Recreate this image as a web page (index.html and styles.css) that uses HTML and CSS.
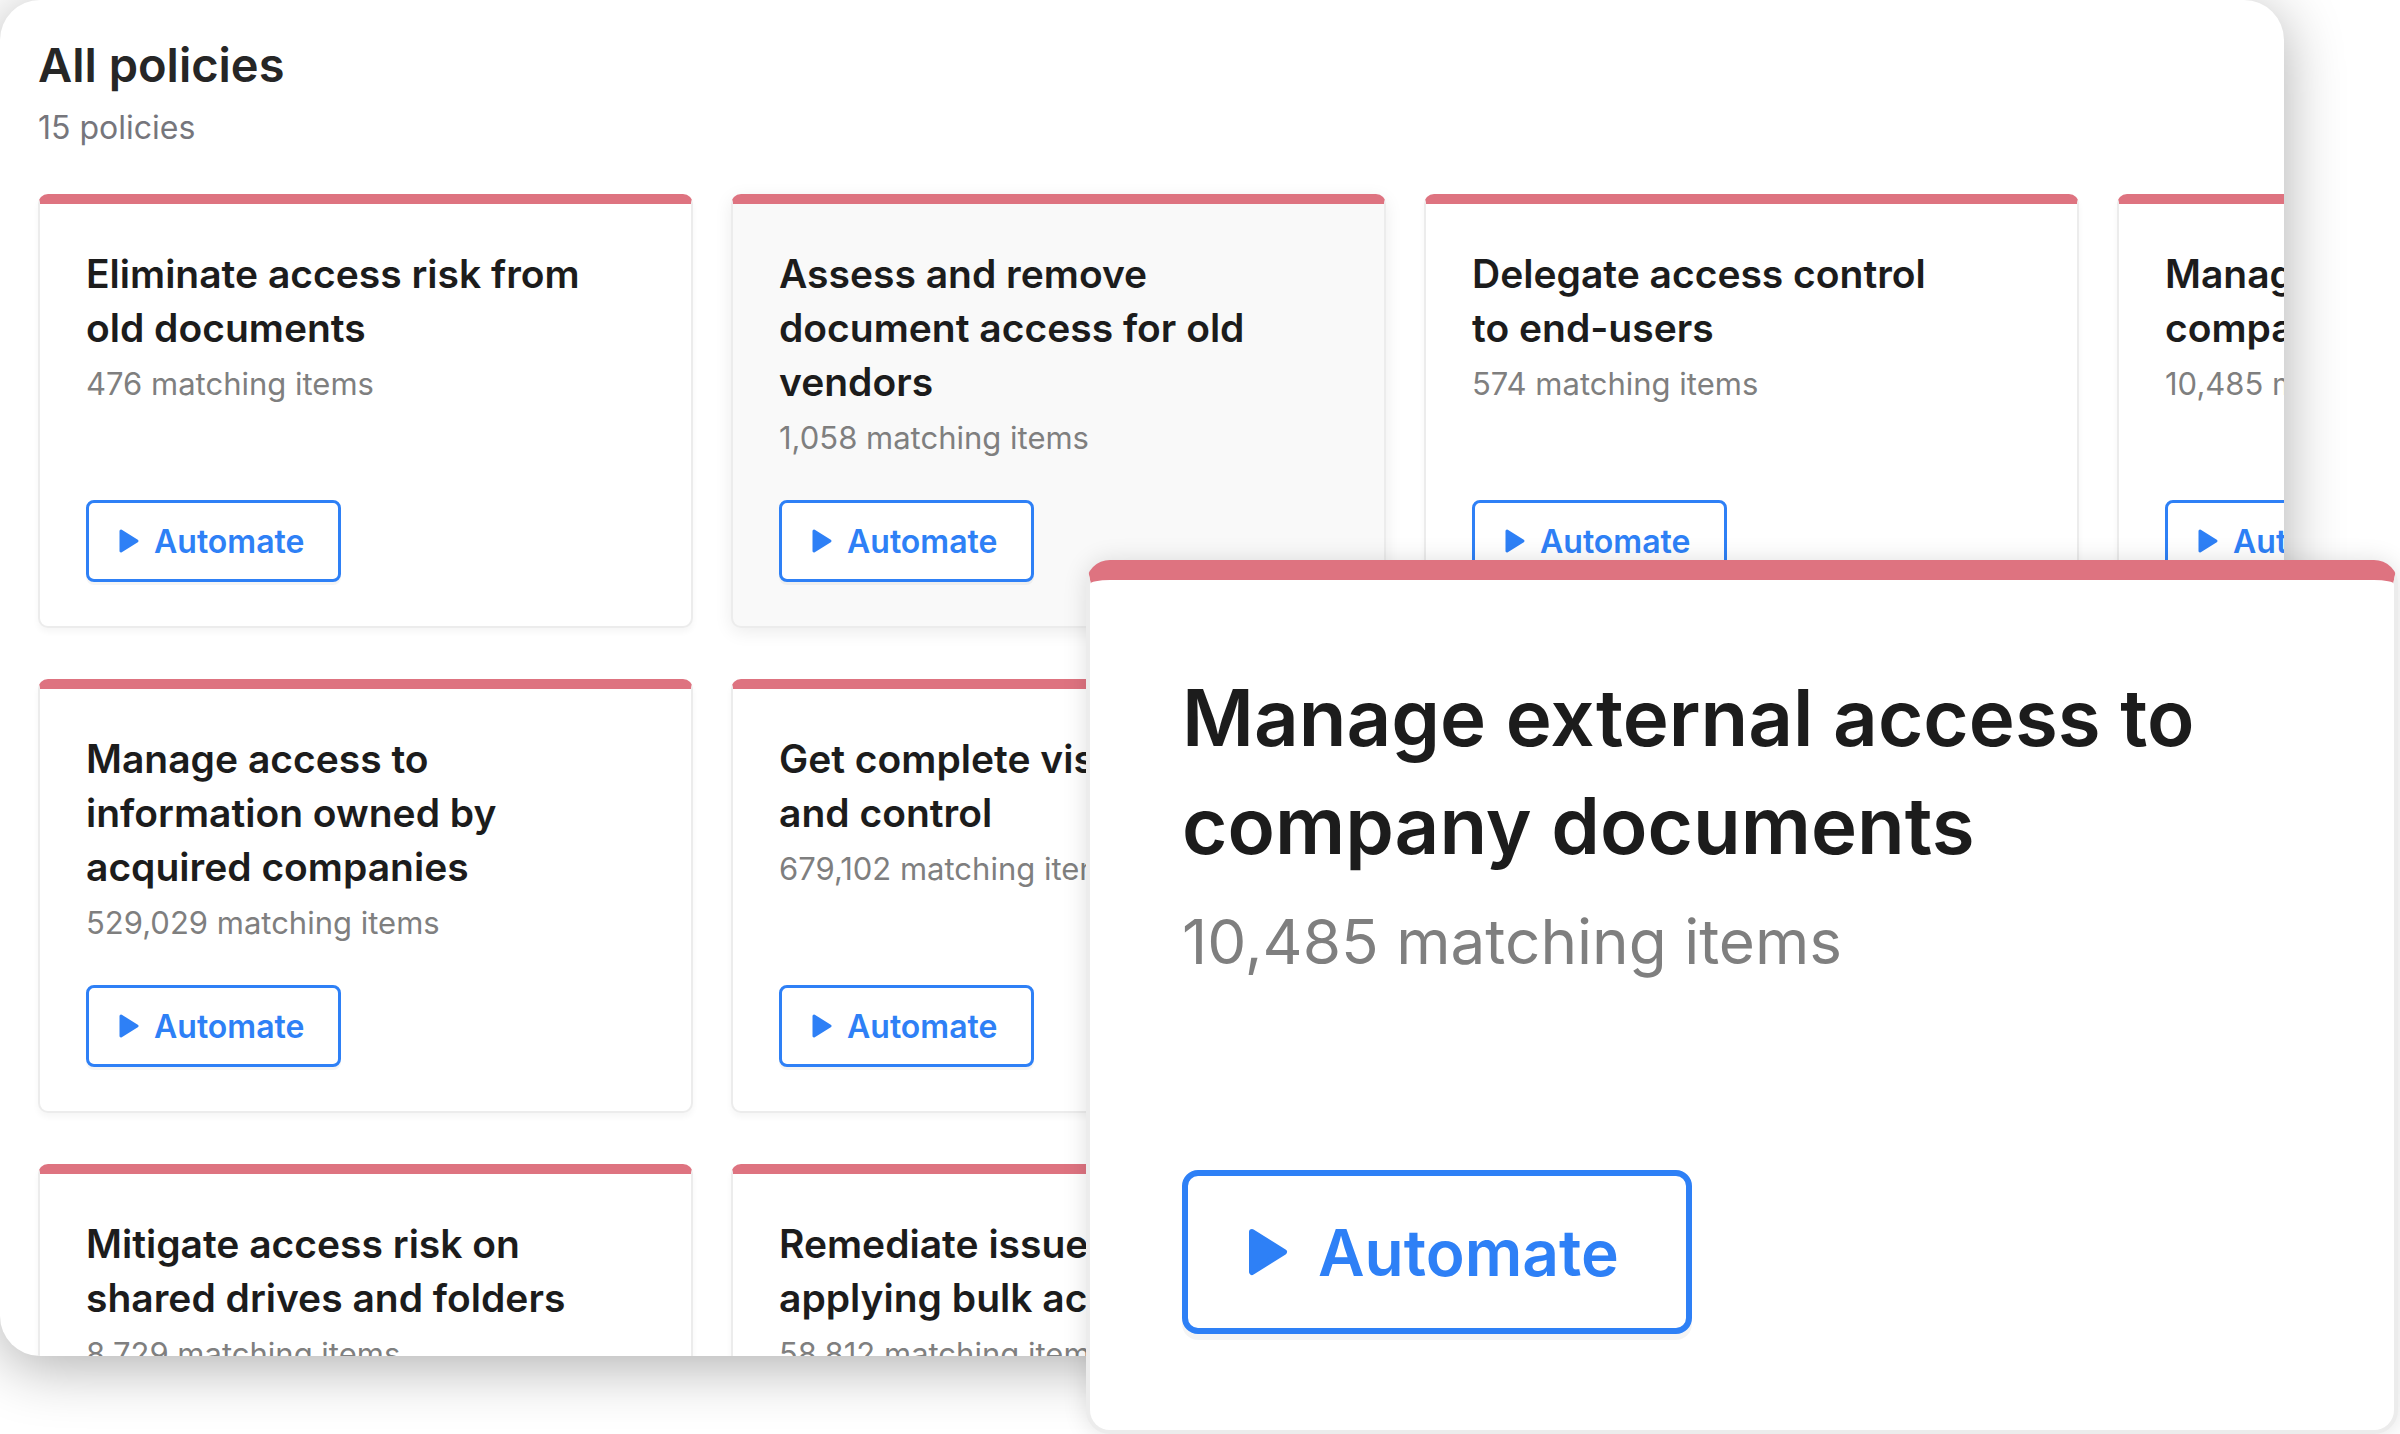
FILE: index.html
```html
<!DOCTYPE html>
<html lang="en">
<head>
	<meta charset="UTF-8">
	<title>All policies</title>
	<link rel="stylesheet" href="styles.css">
</head>
<body>
	<div class="panel">
		<h1 class="panel-title">All policies</h1>
		<p class="panel-sub">15 policies</p>

		<div class="grid">
			<div class="card">
				<h2 class="card-title">Eliminate access risk from old documents</h2>
				<p class="card-count">476 matching items</p>
				<button class="btn-automate"><svg class="play" viewBox="0 0 22 26"><path d="M3 3 L19 13 L3 23 Z"/></svg>Automate</button>
			</div>
			<div class="card card-hover">
				<h2 class="card-title">Assess and remove document access for old vendors</h2>
				<p class="card-count">1,058 matching items</p>
				<button class="btn-automate"><svg class="play" viewBox="0 0 22 26"><path d="M3 3 L19 13 L3 23 Z"/></svg>Automate</button>
			</div>
			<div class="card">
				<h2 class="card-title">Delegate access control<br>to end-users</h2>
				<p class="card-count">574 matching items</p>
				<button class="btn-automate"><svg class="play" viewBox="0 0 22 26"><path d="M3 3 L19 13 L3 23 Z"/></svg>Automate</button>
			</div>
			<div class="card">
				<h2 class="card-title">Manage external access to company documents</h2>
				<p class="card-count">10,485 matching items</p>
				<button class="btn-automate"><svg class="play" viewBox="0 0 22 26"><path d="M3 3 L19 13 L3 23 Z"/></svg>Automate</button>
			</div>

			<div class="card">
				<h2 class="card-title">Manage access to information owned by acquired companies</h2>
				<p class="card-count">529,029 matching items</p>
				<button class="btn-automate"><svg class="play" viewBox="0 0 22 26"><path d="M3 3 L19 13 L3 23 Z"/></svg>Automate</button>
			</div>
			<div class="card">
				<h2 class="card-title">Get complete visibility<br>and control</h2>
				<p class="card-count">679,102 matching items</p>
				<button class="btn-automate"><svg class="play" viewBox="0 0 22 26"><path d="M3 3 L19 13 L3 23 Z"/></svg>Automate</button>
			</div>
			<div class="card">
				<h2 class="card-title">Restrict sharing of sensitive documents</h2>
				<p class="card-count">3,417 matching items</p>
				<button class="btn-automate"><svg class="play" viewBox="0 0 22 26"><path d="M3 3 L19 13 L3 23 Z"/></svg>Automate</button>
			</div>
			<div class="card">
				<h2 class="card-title">Find files shared with personal accounts</h2>
				<p class="card-count">12,960 matching items</p>
				<button class="btn-automate"><svg class="play" viewBox="0 0 22 26"><path d="M3 3 L19 13 L3 23 Z"/></svg>Automate</button>
			</div>

			<div class="card">
				<h2 class="card-title">Mitigate access risk on shared drives and folders</h2>
				<p class="card-count">8,729 matching items</p>
				<button class="btn-automate"><svg class="play" viewBox="0 0 22 26"><path d="M3 3 L19 13 L3 23 Z"/></svg>Automate</button>
			</div>
			<div class="card">
				<h2 class="card-title">Remediate issues by applying bulk actions</h2>
				<p class="card-count">58,812 matching items</p>
				<button class="btn-automate"><svg class="play" viewBox="0 0 22 26"><path d="M3 3 L19 13 L3 23 Z"/></svg>Automate</button>
			</div>
			<div class="card">
				<h2 class="card-title">Remove public links to internal files</h2>
				<p class="card-count">2,306 matching items</p>
				<button class="btn-automate"><svg class="play" viewBox="0 0 22 26"><path d="M3 3 L19 13 L3 23 Z"/></svg>Automate</button>
			</div>
			<div class="card">
				<h2 class="card-title">Revoke access for departed employees</h2>
				<p class="card-count">41,775 matching items</p>
				<button class="btn-automate"><svg class="play" viewBox="0 0 22 26"><path d="M3 3 L19 13 L3 23 Z"/></svg>Automate</button>
			</div>
		</div>
	</div>

	<!-- the fourth card, shown at double size -->
	<div class="card card-zoom">
		<h2 class="card-title">Manage external access to company documents</h2>
		<p class="card-count">10,485 matching items</p>
		<button class="btn-automate"><svg class="play" viewBox="0 0 22 26"><path d="M3 3 L19 13 L3 23 Z"/></svg>Automate</button>
	</div>
</body>
</html>
```

FILE: styles.css
```css
html, body{
	margin: 0;
	background: #fff;
}
body{
	width: 2400px;
	height: 1434px;
	overflow: hidden;
	position: relative;
	font-family: Inter, "Noto Sans", "Liberation Sans", sans-serif;
}
.panel{
	box-sizing: border-box;
	width: 2284px;
	height: 1356px;
	padding: 36px 0 0 38px;
	background: #fff;
	border-radius: 40px;
	overflow: hidden;
	box-shadow: 0 10px 60px rgba(0,0,0,0.32);
}
.panel-title{
	margin: 0;
	font-size: 47px;
	line-height: 58px;
	font-weight: 600;
	color: #262626;
}
.panel-sub{
	margin: 14px 0 0;
	font-size: 32px;
	line-height: 40px;
	color: #76767c;
}
.grid{
	display: grid;
	grid-template-columns: repeat(4, 655px);
	grid-auto-rows: 434px;
	column-gap: 38px;
	row-gap: 51px;
	margin-top: 46px;
}
.card{
	box-sizing: border-box;
	height: 434px;
	display: flex;
	flex-direction: column;
	align-items: flex-start;
	padding: 43px 46px 44px;
	background: #fff;
	border: 2px solid #ececec;
	border-top: 10px solid #de7380;
	border-radius: 10px;
	box-shadow: 0 4px 6px rgba(0,0,0,0.04);
}
.card-hover{
	background: #f9f9f9;
	box-shadow: 0 4px 18px rgba(0,0,0,0.08);
}
.card-title{
	margin: 0;
	max-width: 512px;
	font-size: 39px;
	line-height: 54px;
	font-weight: 600;
	color: #1c1c1c;
}
.card-count{
	margin: 9px 0 0;
	font-size: 31px;
	line-height: 40px;
	color: #7f7f7f;
}
.btn-automate{
	margin-top: auto;
	box-sizing: border-box;
	height: 82px;
	display: inline-flex;
	align-items: center;
	gap: 14px;
	padding: 0 34px 0 29px;
	background: #fff;
	color: #2e80f6;
	border: 3px solid #2e80f6;
	border-radius: 8px;
	font-family: inherit;
	font-size: 32px;
	font-weight: 600;
	box-shadow: 0 3px 0 rgba(0,0,0,0.04);
}
.play{
	width: 22px;
	height: 26px;
}
.play path{
	fill: #2e80f6;
	stroke: #2e80f6;
	stroke-width: 3;
	stroke-linejoin: round;
}
.card-zoom{
	position: absolute;
	left: 1086px;
	top: 560px;
	width: 656px;
	height: 437px;
	padding-top: 42px;
	padding-bottom: 48px;
	transform: scale(2);
	transform-origin: 0 0;
	border-radius: 12px;
	box-shadow: 0 0 12px rgba(0,0,0,0.12);
}
.card-zoom .card-count{
	margin-top: 11px;
}
```
